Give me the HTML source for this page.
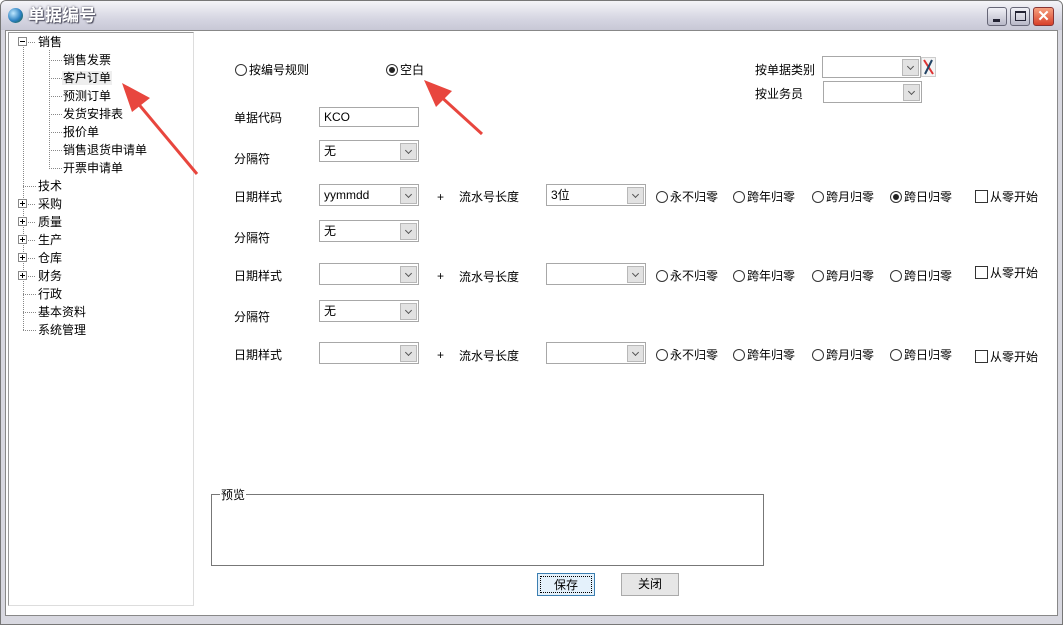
<!DOCTYPE html>
<html><head><meta charset="utf-8"><style>
*{margin:0;padding:0;box-sizing:border-box}
body{width:1063px;height:625px;background:#fff;font-family:"Liberation Sans","Noto Sans CJK SC",sans-serif;font-size:12px;color:#000;position:relative;overflow:hidden}
.a{position:absolute;white-space:nowrap;line-height:14px}
.cb{position:absolute;border:1px solid #a8a8a8;background:#fff;height:22px;padding:3px 4px;font-size:12px;line-height:14px}
.cb .b{position:absolute;right:1px;top:2px;width:17px;height:17px;border:1px solid #b8b8b8;background:#e2e2e2}
.cb .b:after{content:"";position:absolute;left:5px;top:4px;width:4px;height:4px;border-right:1px solid #555;border-bottom:1px solid #555;transform:rotate(45deg)}
.r{position:absolute;white-space:nowrap;line-height:14px;padding-left:14px}
.r:before{content:"";position:absolute;left:0;top:1px;width:12px;height:12px;border:1px solid #333;border-radius:50%;box-sizing:border-box;background:#fff}
.r.on:after{content:"";position:absolute;left:3px;top:4px;width:6px;height:6px;border-radius:50%;background:#222}
.c{position:absolute;white-space:nowrap;line-height:14px;padding-left:15px}
.c:before{content:"";position:absolute;left:0;top:0;width:13px;height:13px;border:1px solid #333;box-sizing:border-box}
.t{position:absolute;white-space:nowrap;line-height:14px}
.pm{position:absolute;width:9px;height:9px;border:1px solid #888;background:#fff}
.pm:before{content:"";position:absolute;left:1px;top:3px;width:5px;height:1px;background:#000}
.pm.p:after{content:"";position:absolute;left:3px;top:1px;width:1px;height:5px;background:#000}
</style></head><body>
<div style="position:absolute;left:0;top:0;width:1063px;height:625px;border:1px solid #777;border-radius:6px 6px 0 0;background:#d8d8e0"></div>
<div style="position:absolute;left:1px;top:1px;width:1061px;height:29px;border-radius:5px 5px 0 0;background:linear-gradient(#f4f4f8,#d6d6e2 60%,#c8c8d6)"></div>
<div style="position:absolute;left:8px;top:8px;width:15px;height:15px;border-radius:50%;background:radial-gradient(circle at 35% 35%,#bfe8ff,#2a7fc0 55%,#1b5b20)"></div>
<div class="a" style="left:28px;top:6px;font-size:17px;line-height:20px;font-weight:bold;color:#fff;text-shadow:0 0 2px #556,1px 1px 1px #445">单据编号</div>
<div style="position:absolute;left:987px;top:7px;width:20px;height:19px;border:1px solid #667;border-radius:3px;background:linear-gradient(#f0f0f6,#b8b8c8)"><div style="position:absolute;left:5px;top:11px;width:7px;height:3px;background:#223"></div></div>
<div style="position:absolute;left:1010px;top:7px;width:20px;height:19px;border:1px solid #667;border-radius:3px;background:linear-gradient(#f0f0f6,#b8b8c8)"><div style="position:absolute;left:4px;top:3px;width:11px;height:10px;border:1px solid #223;border-top-width:2px"></div></div>
<div style="position:absolute;left:1033px;top:7px;width:21px;height:19px;border:1px solid #833;border-radius:3px;background:linear-gradient(#f6a080,#d8402a);color:#fff;font-weight:bold;font-size:15px;line-height:17px;text-align:center">✕</div>
<div style="position:absolute;left:5px;top:30px;width:1053px;height:586px;border:1px solid #888;background:#fff"></div>
<div style="position:absolute;left:8px;top:32px;width:186px;height:574px;border:1px solid #ddd;border-top-color:#999;border-left-color:#999"></div>
<svg style="position:absolute;left:0;top:0" width="200" height="340">
<g stroke="#888" stroke-dasharray="1,1" fill="none">
<line x1="23.5" y1="47" x2="23.5" y2="330"/>
<line x1="49.5" y1="50" x2="49.5" y2="168"/>
<line x1="28" y1="42.5" x2="36" y2="42.5"/>
<line x1="49" y1="60.5" x2="62" y2="60.5"/><line x1="49" y1="78.5" x2="62" y2="78.5"/><line x1="49" y1="96.5" x2="62" y2="96.5"/><line x1="49" y1="114.5" x2="62" y2="114.5"/><line x1="49" y1="132.5" x2="62" y2="132.5"/><line x1="49" y1="150.5" x2="62" y2="150.5"/><line x1="49" y1="168.5" x2="62" y2="168.5"/>
<line x1="23" y1="186.5" x2="36" y2="186.5"/><line x1="28" y1="204.5" x2="36" y2="204.5"/><line x1="28" y1="222.5" x2="36" y2="222.5"/><line x1="28" y1="240.5" x2="36" y2="240.5"/><line x1="28" y1="258.5" x2="36" y2="258.5"/><line x1="28" y1="276.5" x2="36" y2="276.5"/>
<line x1="23" y1="294.5" x2="36" y2="294.5"/><line x1="23" y1="312.5" x2="36" y2="312.5"/><line x1="23" y1="330.5" x2="36" y2="330.5"/>
</g></svg>
<div class="pm" style="left:18px;top:37px"></div>
<div class="pm p" style="left:18px;top:199px"></div><div class="pm p" style="left:18px;top:217px"></div><div class="pm p" style="left:18px;top:235px"></div><div class="pm p" style="left:18px;top:253px"></div><div class="pm p" style="left:18px;top:271px"></div>
<div class="t" style="left:38px;top:35px">销售</div>
<div class="t" style="left:63px;top:53px">销售发票</div>
<div class="t" style="left:62px;top:71px;background:#eee;padding:0 1px">客户订单</div>
<div class="t" style="left:63px;top:89px">预测订单</div>
<div class="t" style="left:63px;top:107px">发货安排表</div>
<div class="t" style="left:63px;top:125px">报价单</div>
<div class="t" style="left:63px;top:143px">销售退货申请单</div>
<div class="t" style="left:63px;top:161px">开票申请单</div>
<div class="t" style="left:38px;top:179px">技术</div>
<div class="t" style="left:38px;top:197px">采购</div>
<div class="t" style="left:38px;top:215px">质量</div>
<div class="t" style="left:38px;top:233px">生产</div>
<div class="t" style="left:38px;top:251px">仓库</div>
<div class="t" style="left:38px;top:269px">财务</div>
<div class="t" style="left:38px;top:287px">行政</div>
<div class="t" style="left:38px;top:305px">基本资料</div>
<div class="t" style="left:38px;top:323px">系统管理</div>

<div class="r" style="left:235px;top:63px">按编号规则</div>
<div class="r on" style="left:386px;top:63px">空白</div>
<div class="t" style="left:755px;top:63px">按单据类别</div>
<div class="cb" style="left:822px;top:56px;width:99px"><div class="b"></div></div>
<svg style="position:absolute;left:921px;top:57px" width="15" height="20"><rect x="0.5" y="0.5" width="14" height="19" fill="#f4f4f4" stroke="#ccc"/><line x1="3" y1="3" x2="12" y2="17" stroke="#d33" stroke-width="2"/><line x1="11" y1="3" x2="4" y2="17" stroke="#246" stroke-width="2"/></svg>
<div class="t" style="left:755px;top:87px">按业务员</div>
<div class="cb" style="left:823px;top:81px;width:99px"><div class="b"></div></div>

<div class="t" style="left:234px;top:111px">单据代码</div>
<div class="cb" style="left:319px;top:107px;width:100px;height:20px;padding-top:2px">KCO</div>

<div class="t" style="left:234px;top:152px">分隔符</div>
<div class="cb" style="left:319px;top:140px;width:100px">无<div class="b"></div></div>

<div class="t" style="left:234px;top:190px">日期样式</div>
<div class="cb" style="left:319px;top:184px;width:100px">yymmdd<div class="b"></div></div>
<div class="t" style="left:437px;top:190px">+</div>
<div class="t" style="left:459px;top:190px">流水号长度</div>
<div class="cb" style="left:546px;top:184px;width:100px">3位<div class="b"></div></div>
<div class="r" style="left:656px;top:190px">永不归零</div><div class="r" style="left:733px;top:190px">跨年归零</div><div class="r" style="left:812px;top:190px">跨月归零</div><div class="r on" style="left:890px;top:190px">跨日归零</div><div class="c" style="left:975px;top:190px">从零开始</div>

<div class="t" style="left:234px;top:231px">分隔符</div>
<div class="cb" style="left:319px;top:220px;width:100px">无<div class="b"></div></div>

<div class="t" style="left:234px;top:269px">日期样式</div>
<div class="cb" style="left:319px;top:263px;width:100px"><div class="b"></div></div>
<div class="t" style="left:437px;top:269px">+</div>
<div class="t" style="left:459px;top:270px">流水号长度</div>
<div class="cb" style="left:546px;top:263px;width:100px"><div class="b"></div></div>
<div class="r" style="left:656px;top:269px">永不归零</div><div class="r" style="left:733px;top:269px">跨年归零</div><div class="r" style="left:812px;top:269px">跨月归零</div><div class="r" style="left:890px;top:269px">跨日归零</div><div class="c" style="left:975px;top:266px">从零开始</div>

<div class="t" style="left:234px;top:310px">分隔符</div>
<div class="cb" style="left:319px;top:300px;width:100px">无<div class="b"></div></div>

<div class="t" style="left:234px;top:348px">日期样式</div>
<div class="cb" style="left:319px;top:342px;width:100px"><div class="b"></div></div>
<div class="t" style="left:437px;top:348px">+</div>
<div class="t" style="left:459px;top:349px">流水号长度</div>
<div class="cb" style="left:546px;top:342px;width:100px"><div class="b"></div></div>
<div class="r" style="left:656px;top:348px">永不归零</div><div class="r" style="left:733px;top:348px">跨年归零</div><div class="r" style="left:812px;top:348px">跨月归零</div><div class="r" style="left:890px;top:348px">跨日归零</div><div class="c" style="left:975px;top:350px">从零开始</div>

<div style="position:absolute;left:211px;top:494px;width:553px;height:72px;border:1px solid #777"></div>
<div class="t" style="left:220px;top:488px;background:#fff;padding:0 1px">预览</div>
<div style="position:absolute;left:537px;top:573px;width:58px;height:23px;border:1px solid #3c7fb1;background:#e4f1fb"><div style="position:absolute;left:2px;top:2px;right:2px;bottom:2px;border:1px dotted #000;text-align:center;line-height:17px">保存</div></div>
<div style="position:absolute;left:621px;top:573px;width:58px;height:23px;border:1px solid #aaa;background:#e6e6e6;text-align:center;line-height:21px">关闭</div>

<svg style="position:absolute;left:0;top:0" width="1063" height="625">
<g fill="#e8463e" stroke="#e8463e">
<line x1="197" y1="174" x2="136" y2="101" stroke-width="3"/>
<polygon points="122,83 150,98 132,112" stroke="none"/>
<line x1="482" y1="134" x2="438" y2="94" stroke-width="3"/>
<polygon points="424,80 452,91 436,107" stroke="none"/>
</g></svg>
</body></html>
